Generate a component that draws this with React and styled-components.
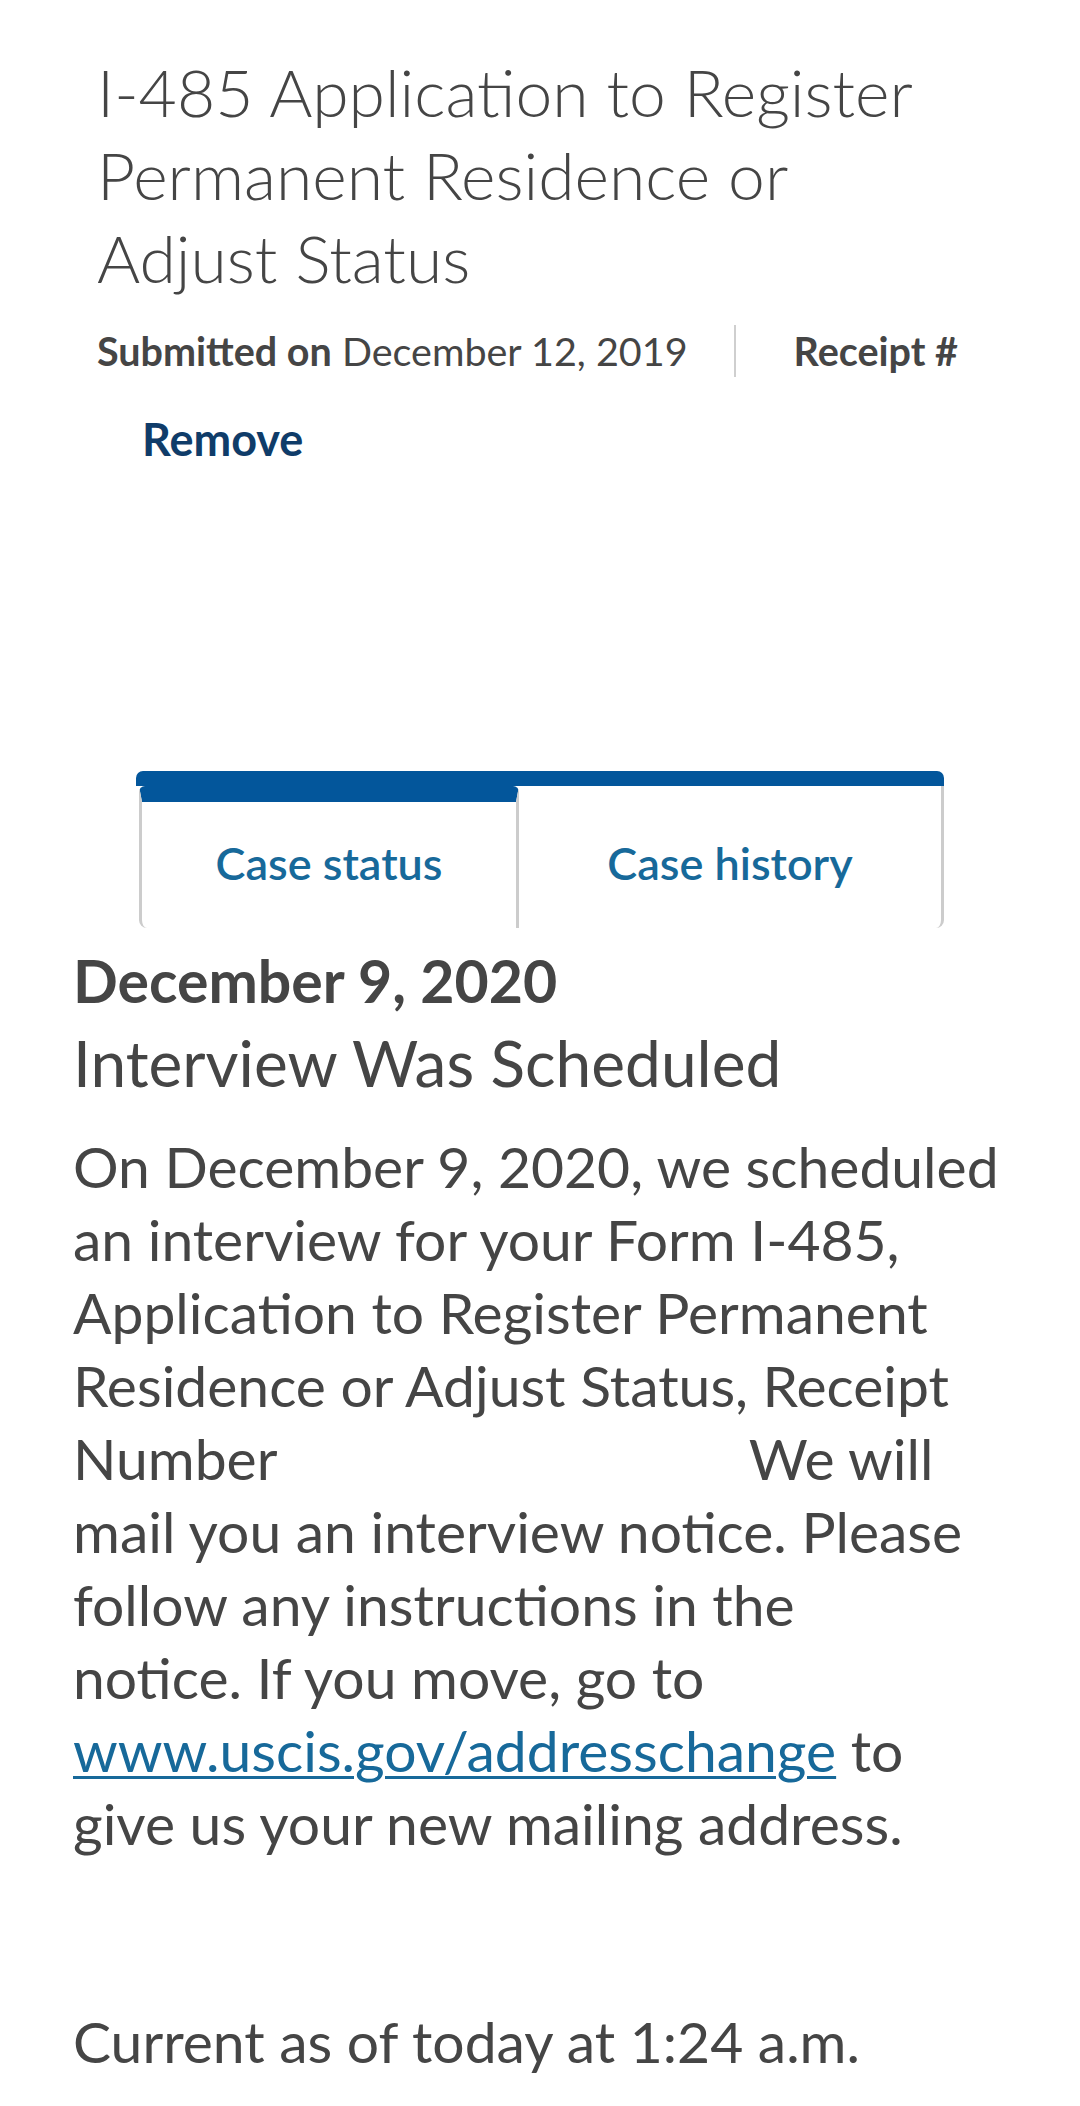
import React from 'react';
import styled, { createGlobalStyle } from 'styled-components';

const GlobalStyle = createGlobalStyle`
  html, body {
    margin: 0;
    padding: 0;
    background: #fff;
  }
  body {
    font-family: Lato, "Open Sans", "Liberation Sans", sans-serif;
    color: #454545;
  }
`

const Page = styled.main`
  padding: 50px 0 16px;
`

const Header = styled.header`
  padding: 0 97px;
`

const Title = styled.h1`
  margin: 0;
  font-weight: 300;
  font-size: 66px;
  line-height: 83px;
  color: #454545;
`

const MetaRow = styled.div`
  display: flex;
  margin-top: 26px;
  height: 52px;
  max-width: 883px;
  overflow: hidden;
`

const MetaItem = styled.div`
  flex: none;
  white-space: nowrap;
  font-size: 39.5px;
  line-height: 52px;
  padding: ${p => (p.divided ? '0 0 0 58px' : '0 46px 0 0')};
  border-left: ${p => (p.divided ? '2px solid #cfcfcf' : 'none')};

  b {
    font-weight: 700;
  }
`

const RemoveLink = styled.a`
  display: inline-block;
  margin: 37px 0 0 45px;
  font-weight: 700;
  font-size: 45px;
  line-height: 50px;
  color: #0f3c69;
  text-decoration: none;
`

const Tabs = styled.nav`
  width: 808px;
  margin: 307px 0 0 136px;
`

const TabBar = styled.div`
  height: 15px;
  background: #03569b;
  border-radius: 7px 7px 0 0;
`

const TabRow = styled.div`
  display: flex;
  height: 142px;
`

const Tab = styled.button`
  box-sizing: border-box;
  display: flex;
  justify-content: center;
  align-items: flex-start;
  flex: ${p => (p.active ? '0 0 380px' : '1 1 auto')};
  margin-left: ${p => (p.active ? '3px' : '0')};
  padding: ${p => (p.active ? '36px' : '52px')} 0 0;
  background: #fff;
  border: none;
  border-top: ${p => (p.active ? '16px solid #03569b' : 'none')};
  border-left: ${p => (p.active ? '3px solid #cccccc' : 'none')};
  border-right: 3px solid #cccccc;
  border-radius: ${p => (p.active ? '6px 6px 0 8px' : '0 0 8px 0')};
  font-family: inherit;
  font-weight: 600;
  font-size: 45px;
  line-height: 50px;
  color: #17699a;
  cursor: pointer;
`

const Content = styled.section`
  padding: 18px 70px 0 73px;
`

const CaseDate = styled.h2`
  margin: 0;
  font-weight: 700;
  font-size: 59px;
  line-height: 70px;
`

const CaseTitle = styled.h3`
  margin: 7px 0 0;
  font-weight: 400;
  font-size: 64px;
  line-height: 80px;
`

const Body = styled.p`
  margin: ${p => (p.footer ? '145px' : '27px')} 0 0;
  font-size: 57px;
  line-height: 73px;
`

const Redacted = styled.span`
  display: inline-block;
  width: 444px;
  height: 1px;
`

const TextLink = styled.a`
  color: #17699a;
  text-decoration: underline;
  text-decoration-thickness: 3px;
  text-underline-offset: 4px;
`

export default function App() {
  return (
    <>
      <GlobalStyle />
      <Page>
        <Header>
          <Title>I-485 Application to Register Permanent Residence or Adjust Status</Title>
          <MetaRow>
            <MetaItem>
              <b>Submitted on</b> December 12, 2019
            </MetaItem>
            <MetaItem divided>
              <b>Receipt #</b>
            </MetaItem>
          </MetaRow>
          <RemoveLink href="#">Remove</RemoveLink>
        </Header>

        <Tabs>
          <TabBar />
          <TabRow>
            <Tab active>Case status</Tab>
            <Tab>Case history</Tab>
          </TabRow>
        </Tabs>

        <Content>
          <CaseDate>December 9, 2020</CaseDate>
          <CaseTitle>Interview Was Scheduled</CaseTitle>
          <Body>
            On December 9, 2020, we scheduled an interview for your Form I-485, Application to
            Register Permanent Residence or Adjust Status, Receipt Number <Redacted /> We will
            mail you an interview notice. Please follow any instructions in the
            <br />
            notice. If you move, go to <TextLink href="#">www.uscis.gov/addresschange</TextLink> to
            give us your new mailing address.
          </Body>
          <Body footer>Current as of today at 1:24 a.m.</Body>
        </Content>
      </Page>
    </>
  );
}
